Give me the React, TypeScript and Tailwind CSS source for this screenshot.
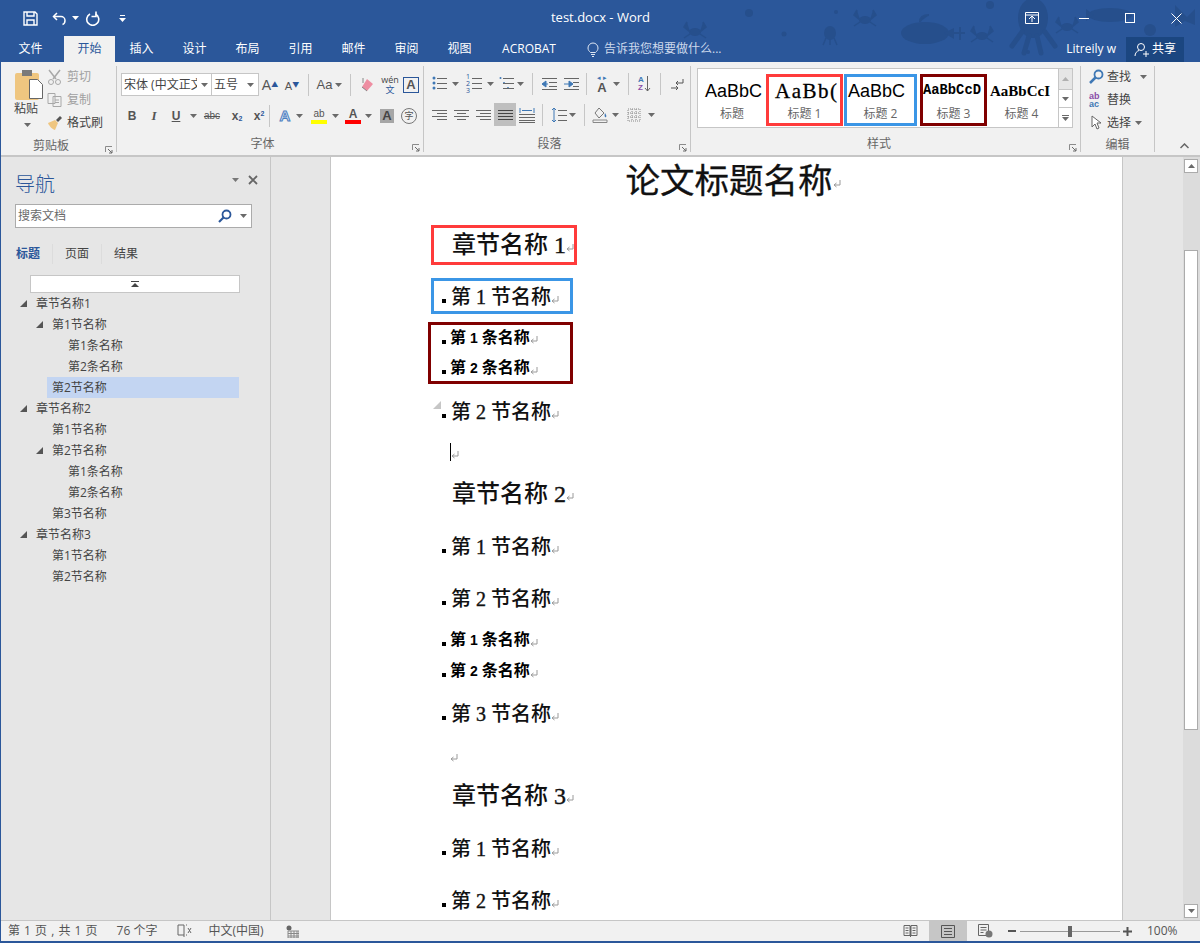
import type { ReactNode } from 'react';

const uiFont = "font-['Open_Sans','Noto_Sans_CJK_SC',sans-serif]";
const docFont = "font-['Liberation_Serif','Noto_Sans_CJK_SC',serif]";

function Ico({ w = 16, h = 16, children }: { w?: number; h?: number; children: ReactNode }) {
  return (
    <svg width={w} height={h} viewBox={`0 0 ${w} ${h}`} fill="none" className="shrink-0">
      {children}
    </svg>
  );
}

function Caret({ color = '#6a6a6a' }: { color?: string }) {
  return (
    <svg width="7" height="4" viewBox="0 0 7 4" className="shrink-0">
      <path d="M0 0h7L3.5 4z" fill={color} />
    </svg>
  );
}

function Launcher() {
  return (
    <svg width="8" height="8" viewBox="0 0 8 8" fill="none">
      <path d="M.5 6V.5H7" stroke="#8a8a8a" />
      <path d="M3 3l4 4M7 4v3H4" stroke="#6a6a6a" />
    </svg>
  );
}

function Sep({ ml = 'ml-0' }: { ml?: string }) {
  return <div className={`w-px h-[22px] bg-[#c6c6c6] shrink-0 ${ml}`} />;
}

function GroupLabel({ text }: { text: string }) {
  return <div className="text-[12px] leading-[16px] text-[#666] text-center">{text}</div>;
}

function Lines({ rows, x = 0, w = 14, color = '#666' }: { rows: [number, number][]; x?: number; w?: number; color?: string }) {
  return (
    <>
      {rows.map(([y, l], i) => (
        <path key={i} d={`M${x + l} ${y + 0.5}h${w - l}`} stroke={color} />
      ))}
    </>
  );
}

function TitleDoodles() {
  const c = '#264f8c';
  return (
    <svg width="530" height="62" viewBox="0 0 530 62" className="absolute right-0 top-0 pointer-events-none">
      <g fill={c}>
        <circle cx="79" cy="13" r="4" />
        <circle cx="114" cy="34" r="2.5" />
        <circle cx="166" cy="12" r="2" />
        <circle cx="320" cy="5" r="4" />
        <circle cx="358" cy="52" r="2" />
        <ellipse cx="160" cy="33" rx="6" ry="7" />
        <path d="M156 38l-3 7M160 39v6M164 38l3 7" stroke={c} strokeWidth="1.5" />
        <ellipse cx="255" cy="33" rx="24" ry="11" />
        <path d="M250 22c0-5 3-7 9-7" stroke={c} strokeWidth="2" />
        <path d="M274 33l10-5v11zM289 27h2v13h-2zM284 32h11v2h-11z" />
        <ellipse cx="363" cy="18" rx="15" ry="20" />
        <path d="M352 32l-10 14M359 36l-5 17M367 36l4 17M375 32l10 14" stroke={c} strokeWidth="5" strokeLinecap="round" />
        <ellipse cx="440" cy="15" rx="22" ry="7" />
        <path d="M416 9l8 6-8 6z" />
        <circle cx="480" cy="30" r="6" />
        <path d="M505 5l12 12 8-8v16l-10-4-10 6z" />
        {[[25, 32], [195, 20], [312, 36], [397, 27]].map(([x, y], i) => (
          <g key={i}>
            <ellipse cx={x} cy={y} rx="6" ry="4" />
            <path d={`M${x - 5} ${y}l-6-5 3-5M${x + 5} ${y}l6-5-3-5M${x - 5} ${y + 2}l-6 4M${x + 5} ${y + 2}l6 4`} stroke={c} strokeWidth="1.5" />
          </g>
        ))}
      </g>
    </svg>
  );
}

function TitleBar() {
  return (
    <div className="grid grid-cols-[1fr_auto_1fr] items-center h-[36px] text-white">
      <div className="flex items-center">
        <div className="ml-[22px]">
          <Ico w={15} h={15}>
            <path d="M1 1h11l2 2v11H1z" stroke="#fff" strokeWidth="1.4" />
            <path d="M4 1v4h7V1M4 14V9h7v5" stroke="#fff" strokeWidth="1.4" />
          </Ico>
        </div>
        <div className="ml-[14px]">
          <Ico w={15} h={15}>
            <path d="M5 2L1.5 5.5 5 9" stroke="#fff" strokeWidth="1.5" />
            <path d="M2 5.5h7a4 4 0 0 1 4 4c0 2-1 3.500-2.500 4" stroke="#fff" strokeWidth="1.5" />
          </Ico>
        </div>
        <div className="ml-[5px]">
          <Caret color="#fff" />
        </div>
        <div className="ml-[6px]">
          <Ico w={15} h={15}>
            <path d="M5 3a6 6 0 1 0 5.500 0" stroke="#fff" strokeWidth="1.6" />
            <path d="M11 .5v5H6.500" stroke="#fff" strokeWidth="1.6" />
          </Ico>
        </div>
        <div className="ml-[19px] flex flex-col items-center gap-[2px]">
          <div className="w-[5px] h-px bg-white" />
          <Caret color="#fff" />
        </div>
      </div>
      <div className="text-[13px] relative">test.docx - Word</div>
      <div className="flex items-center justify-end relative">
        <div className="w-[46px] flex justify-center mr-[6px]">
          <Ico w={14} h={12}>
            <path d="M.5.5h13v11H.5zM.5 3h13" stroke="#fff" />
            <path d="M4 7l3-3 3 3M7 4v6" stroke="#fff" />
          </Ico>
        </div>
        <div className="w-[46px] flex justify-center">
          <div className="w-[10px] h-px bg-white" />
        </div>
        <div className="w-[46px] flex justify-center">
          <div className="w-[10px] h-[10px] border border-white" />
        </div>
        <div className="w-[46px] flex justify-center mr-[1px]">
          <Ico w={11} h={11}>
            <path d="M.5.5l10 10M10.500.5l-10 10" stroke="#fff" />
          </Ico>
        </div>
      </div>
    </div>
  );
}

function TabsRow() {
  const tabs = ['插入', '设计', '布局', '引用', '邮件', '审阅', '视图'];
  return (
    <div className="flex items-stretch h-[26px] text-[12px] text-white relative">
      <div className="w-[53px] ml-[3px] flex items-center justify-center">文件</div>
      <div className="w-[51px] ml-[7px] flex items-center justify-center bg-[#f1f1f1] text-[#2b579a]">开始</div>
      {tabs.map(t => (
        <div key={t} className="w-[53px] flex items-center justify-center">
          {t}
        </div>
      ))}
      <div className="w-[86px] flex items-center justify-center">ACROBAT</div>
      <div className="ml-[15px] flex items-center gap-[5px] text-[#cdd9ec]">
        <Ico w={12} h={15}>
          <path d="M3.500 10.500C2 9 1 8 1 6a5 5 0 0 1 10 0c0 2-1 3-2.500 4.500zM4 12.500h4M5 14.500h2" stroke="#dfe7f3" />
        </Ico>
        <span>告诉我您想要做什么...</span>
      </div>
      <div className="ml-auto flex items-center">
        <span className="text-[12px] mr-[10px]">Litreily w</span>
        <div className="w-[58px] h-[25px] bg-[#1b4680] flex items-center justify-center gap-[3px] mr-[16px]">
          <Ico w={15} h={15}>
            <circle cx="7" cy="5" r="3.500" stroke="#fff" />
            <path d="M1 14c0-3 2-5 4-5.500M9 12h6M12 9v6" stroke="#fff" />
          </Ico>
          <span>共享</span>
        </div>
      </div>
    </div>
  );
}

function Clipboard() {
  return (
    <div className="w-[115px] flex flex-col shrink-0">
      <div className="h-[70px] flex">
        <div className="w-[46px] pl-[13px] pt-[4px] flex flex-col items-start">
          <Ico w={30} h={30}>
            <rect x="1" y="3" width="24" height="27" rx="2" fill="#efc680" />
            <rect x="8" y="0" width="10" height="6" fill="#7a7a7a" />
            <path d="M15.500 9.500h8l5 5v14h-13z" fill="#fff" stroke="#666" />
          </Ico>
          <span className="text-[12px] leading-[16px] mt-[1px] text-[#444]">粘贴</span>
          <div className="ml-[10px] mt-[6px]">
            <Caret />
          </div>
        </div>
        <div className="flex flex-col -mt-[1px] text-[12px] text-[#444]">
          <div className="h-[23px] flex items-center gap-[5px] text-[#a0a0a0]">
            <Ico w={15} h={16}>
              <path d="M2 1l7 9M13 1l-7 9" stroke="#a8a8a8" strokeWidth="1.500" />
              <circle cx="4" cy="13" r="2.500" stroke="#a8a8a8" />
              <circle cx="11" cy="13" r="2.500" stroke="#a8a8a8" />
            </Ico>
            <span>剪切</span>
          </div>
          <div className="h-[23px] flex items-center gap-[5px] text-[#a0a0a0]">
            <Ico w={15} h={16}>
              <path d="M1 1.500h7v10H1zM6 4.500h8v10H6z" stroke="#a8a8a8" fill="#f1f1f1" />
              <path d="M8 8h4M8 10.500h4" stroke="#a8a8a8" />
            </Ico>
            <span>复制</span>
          </div>
          <div className="h-[23px] flex items-center gap-[5px]">
            <Ico w={15} h={16}>
              <path d="M9 5l4-4 2 2-4 4z" fill="#555" />
              <path d="M1 8l7-3 3 3-3 7c-2 0-6-4-7-7z" fill="#efc680" />
            </Ico>
            <span>格式刷</span>
          </div>
        </div>
      </div>
      <div className="flex items-center mt-[2px]">
        <div className="flex-1 pr-[4px]">
          <GroupLabel text="剪贴板" />
        </div>
        <div className="mr-[3px] mt-[8px] flex">
          <Launcher />
        </div>
      </div>
    </div>
  );
}

function BigA({ cls, text = 'A' }: { cls: string; text?: string }) {
  return <span className={`font-['Liberation_Sans',sans-serif] leading-none ${cls}`}>{text}</span>;
}

function Font() {
  return (
    <div className="w-[307px] flex flex-col shrink-0 border-l border-[#c6c6c6] h-[86px] mt-[4px] -mb-[4px]">
      <div className="h-[70px] pl-[4px] pt-[7px] flex flex-col">
        <div className="flex items-center h-[23px]">
          <div className="w-[91px] h-[23px] bg-white border border-[#c6c6c6] flex items-center pl-[2px] text-[12px] text-[#444] overflow-hidden">
            <span className="w-[73px] whitespace-nowrap overflow-hidden">宋体 (中文正文)</span>
            <span className="ml-[4px]">
              <Caret />
            </span>
          </div>
          <div className="w-[47px] h-[23px] bg-white border border-l-0 border-[#c6c6c6] flex items-center pl-[2px] text-[12px] text-[#444]">
            <span>五号</span>
            <span className="ml-[9px]">
              <Caret />
            </span>
          </div>
          <div className="w-[22px] flex justify-center items-end text-[#555]">
            <BigA cls="text-[14px]" />
            <span className="text-[#2b579a] text-[7px] leading-[14px] self-start">▲</span>
          </div>
          <div className="w-[22px] flex justify-center items-end text-[#555]">
            <BigA cls="text-[11px]" />
            <span className="text-[#2b579a] text-[7px] leading-[14px] self-start">▼</span>
          </div>
          <Sep ml="ml-[5px]" />
          <div className="w-[41px] flex justify-center items-center gap-[3px] text-[#555]">
            <BigA cls="text-[13px]" text="Aa" />
            <Caret />
          </div>
          <Sep />
          <div className="w-[32px] flex justify-center">
            <Ico w={16} h={16}>
              <path d="M8 2l6 5-6 7-5-4z" fill="#ee8ea2" />
              <path d="M3 10l5 4" stroke="#888" />
              <path d="M4 1v5" stroke="#888" />
            </Ico>
          </div>
          <div className="w-[14px] flex flex-col items-center leading-none">
            <span className="text-[9px] leading-[10px] text-[#444]">wén</span>
            <span className="text-[9px] leading-[10px] text-[#2b579a]">文</span>
          </div>
          <div className="ml-[6px] w-[16px] h-[16px] border border-[#2b579a] flex items-center justify-center">
            <BigA cls="text-[13px] font-bold text-[#555]" />
          </div>
        </div>
        <div className="flex items-center h-[23px] mt-[8px] text-[#555]">
          <span className="w-[22px] text-center font-['Liberation_Sans',sans-serif] text-[12px] font-bold">B</span>
          <span className="w-[22px] text-center font-['Liberation_Serif',serif] text-[13px] italic font-bold">I</span>
          <span className="w-[22px] text-center font-['Liberation_Sans',sans-serif] text-[12px] font-bold underline">U</span>
          <span className="w-[13px] flex justify-center">
            <Caret />
          </span>
          <span className="w-[24px] text-center font-['Liberation_Sans',sans-serif] text-[10px] line-through">abc</span>
          <span className="w-[26px] text-center font-['Liberation_Sans',sans-serif] text-[12px] font-bold">
            x<sub className="text-[7px] text-[#2b579a]">2</sub>
          </span>
          <span className="w-[18px] text-center font-['Liberation_Sans',sans-serif] text-[12px] font-bold">
            x<sup className="text-[7px] text-[#2b579a]">2</sup>
          </span>
          <Sep ml="ml-[1px]" />
          <div className="w-[22px] ml-[4px] flex justify-center">
            <span className="font-['Liberation_Sans',sans-serif] text-[15px] leading-none font-bold text-[#dbe6f5] [-webkit-text-stroke:1px_#4d7fc0]">A</span>
          </div>
          <span className="w-[7px] flex justify-center">
            <Caret />
          </span>
          <div className="w-[26px] ml-[3px] flex flex-col items-center">
            <span className="text-[10px] leading-[12px] text-[#555] font-['Liberation_Sans',sans-serif]">ab</span>
            <div className="w-[16px] h-[4px] bg-[#ffff00]" />
          </div>
          <span className="w-[7px] flex justify-center">
            <Caret />
          </span>
          <div className="w-[22px] ml-[3px] flex flex-col items-center">
            <BigA cls="text-[12px] font-bold text-[#555]" />
            <div className="w-[16px] h-[4px] bg-[#ff0000]" />
          </div>
          <span className="w-[7px] ml-[1px] flex justify-center">
            <Caret />
          </span>
          <div className="ml-[8px] w-[14px] h-[14px] bg-[#a6a6a6] flex items-center justify-center">
            <BigA cls="text-[13px] font-bold text-[#444]" />
          </div>
          <div className="ml-[7px] w-[16px] h-[16px] rounded-full border border-[#777] flex items-center justify-center text-[9px] text-[#555]">字</div>
        </div>
      </div>
      <div className="flex items-center mt-[2px]">
        <div className="flex-1 pr-[4px]">
          <GroupLabel text="字体" />
        </div>
        <div className="mr-[3px] mt-[8px] flex">
          <Launcher />
        </div>
      </div>
    </div>
  );
}

function Paragraph() {
  const blue = '#3f78b5';
  return (
    <div className="w-[267px] flex flex-col shrink-0 border-l border-[#c6c6c6] h-[86px] mt-[4px] -mb-[4px]">
      <div className="h-[70px] pl-[8px] pt-[6px] flex flex-col">
        <div className="flex items-center h-[23px]">
          <Ico w={15} h={15}>
            {[2, 7, 12].map(y => (
              <circle key={y} cx="2" cy={y} r="1.500" fill={blue} />
            ))}
            <Lines rows={[[2, 0], [7, 0], [12, 0]]} x={5} w={10} />
          </Ico>
          <span className="ml-[5px]"><Caret /></span>
          <span className="ml-[7px] text-[7px] leading-[7px] w-[6px] text-[#2b579a]">1<br />2<br />3</span>
          <Ico w={10} h={15}>
            <Lines rows={[[2, 0], [7, 0], [12, 0]]} x={0} w={10} />
          </Ico>
          <span className="ml-[5px]"><Caret /></span>
          <span className="ml-[5px]">
            <Ico w={15} h={15}>
              <circle cx="1.500" cy="2" r="1" fill={blue} />
              <circle cx="5" cy="7" r="1" fill={blue} />
              <circle cx="9" cy="12" r="1" fill={blue} />
              <Lines rows={[[2, 0], [7, 0], [12, 0]]} x={4} w={11} />
            </Ico>
          </span>
          <span className="ml-[3px]"><Caret /></span>
          <Sep ml="ml-[8px]" />
          <span className="ml-[8px]">
            <Ico w={16} h={14}>
              <path d="M5 4L1 7l4 3zM2 7h5" fill={blue} stroke={blue} />
              <Lines rows={[[1, 0], [12, 0]]} x={1} w={15} />
              <Lines rows={[[5, 0], [9, 0]]} x={8} w={8} />
            </Ico>
          </span>
          <span className="ml-[6px]">
            <Ico w={16} h={14}>
              <path d="M6 4l4 3-4 3zM1 7h5" fill={blue} stroke={blue} />
              <Lines rows={[[1, 0], [12, 0]]} x={1} w={15} />
              <Lines rows={[[5, 0], [9, 0]]} x={10} w={6} />
            </Ico>
          </span>
          <Sep ml="ml-[7px]" />
          <div className="w-[16px] ml-[7px] flex flex-col items-center">
            <span className="text-[#3f78b5] text-[7px] leading-[7px] whitespace-nowrap">◂ ▸</span>
            <BigA cls="text-[13px] font-bold text-[#555]" />
          </div>
          <span className="ml-[3px]"><Caret /></span>
          <Sep ml="ml-[8px]" />
          <div className="ml-[9px] w-[14px] flex">
            <span className="text-[8px] leading-[8px] font-bold font-['Liberation_Sans',sans-serif]">
              <span className="text-[#3f78b5]">A</span>
              <br />
              <span className="text-[#8a4ea8]">Z</span>
            </span>
            <Ico w={7} h={16}>
              <path d="M3.500 0v15M1 12l2.500 3L6 12" stroke="#666" />
            </Ico>
          </div>
          <Sep ml="ml-[8px]" />
          <span className="ml-[9px]">
            <Ico w={14} h={14}>
              <path d="M13 2v4H6M6 6l2-2M6 6l2 2" stroke="#555" />
              <path d="M1 11h7M8 11l-2-2M8 11l-2 2" stroke="#555" />
            </Ico>
          </span>
        </div>
        <div className="flex items-center h-[23px] mt-[8px]">
          <Ico w={15} h={12}>
            <Lines rows={[[1, 0], [4, 5], [7, 0], [10, 5]]} w={15} />
          </Ico>
          <span className="ml-[7px]">
            <Ico w={15} h={12}>
              <Lines rows={[[1, 0], [7, 0]]} w={15} />
              <Lines rows={[[4, 3], [10, 3]]} w={12} />
            </Ico>
          </span>
          <span className="ml-[7px]">
            <Ico w={15} h={12}>
              <Lines rows={[[1, 0], [4, 4], [7, 0], [10, 4]]} w={15} />
            </Ico>
          </span>
          <div className="w-[22px] h-[23px] ml-[3px] bg-[#bfbfbf] flex items-center justify-center">
            <Ico w={15} h={12}>
              <Lines rows={[[1, 0], [4, 0], [7, 0], [10, 0]]} w={15} color="#444" />
            </Ico>
          </div>
          <span className="ml-[3px]">
            <Ico w={16} h={16}>
              <path d="M1 1v5M15 1v5M3 3.500h10" stroke={blue} />
              <Lines rows={[[7, 0], [10, 0], [13, 0], [15, 0]]} w={16} />
            </Ico>
          </span>
          <Sep ml="ml-[7px]" />
          <span className="ml-[8px]">
            <Ico w={16} h={16}>
              <path d="M3 1v14M1 3l2-2 2 2M1 13l2 2 2-2" stroke={blue} />
              <Lines rows={[[3, 0], [8, 0], [13, 0]]} x={7} w={9} />
            </Ico>
          </span>
          <span className="ml-[2px]"><Caret /></span>
          <Sep ml="ml-[8px]" />
          <span className="ml-[7px]">
            <Ico w={16} h={16}>
              <path d="M7 1l5 5-5 5-4-5z" stroke="#777" fill="#f1f1f1" />
              <path d="M13 6c1 2 2 3 1 4s-2-1-1-4" fill={blue} />
              <path d="M1 13h14v2.500H1z" stroke="#888" />
            </Ico>
          </span>
          <span className="ml-[4px]"><Caret /></span>
          <span className="ml-[8px]">
            <Ico w={14} h={14}>
              <path d="M1 1h12v12H1zM1 5h12M1 9h12M5 1v12M9 1v12" stroke="#888" strokeDasharray="1 1" />
            </Ico>
          </span>
          <span className="ml-[7px]"><Caret /></span>
        </div>
      </div>
      <div className="flex items-center mt-[2px]">
        <div className="flex-1 pr-[4px]">
          <GroupLabel text="段落" />
        </div>
        <div className="mr-[3px] mt-[8px] flex">
          <Launcher />
        </div>
      </div>
    </div>
  );
}

function StyleItem({ sample, label, cls, box, w }: { sample: string; label: string; cls: string; box: string; w: string }) {
  return (
    <div className={`${w} h-[52px] shrink-0 overflow-hidden flex flex-col items-center ${box}`}>
      <div className={`h-[29px] w-full overflow-hidden whitespace-nowrap flex items-center ${cls}`}>{sample}</div>
      <div className="text-[12px] leading-[16px] text-[#666]">{label}</div>
    </div>
  );
}

function Styles() {
  return (
    <div className="w-[390px] flex flex-col shrink-0 border-l border-[#c6c6c6] h-[86px] mt-[4px] -mb-[4px]">
      <div className="h-[70px] pl-[6px] pt-[2px]">
        <div className="w-[376px] h-[60px] bg-white border border-[#c6c6c6] flex items-start">
          <div className="flex items-start pt-[5px] flex-1">
            <StyleItem w="w-[68px]" box="pt-[3px]" sample="AaBbC" label="标题" cls="pl-[7px] text-[18px] text-black font-['Liberation_Sans',sans-serif]" />
            <StyleItem w="w-[77px]" box="border-[3px] border-[#ff3b3b]" sample="AaBb(" label="标题 1" cls="pl-[6px] text-[21px] tracking-[1.500px] text-black font-['Liberation_Serif',serif] [-webkit-text-stroke:0.300px_#000]" />
            <StyleItem w="w-[73px] ml-[1px]" box="border-[3px] border-[#3b96e6]" sample="AaBbC" label="标题 2" cls="pl-[1px] text-[18px] text-black font-['Liberation_Sans',sans-serif]" />
            <StyleItem w="w-[67px] ml-[3px]" box="border-[3px] border-[#800000]" sample="AaBbCcD" label="标题 3" cls="pl-0 text-[13.800px] text-black font-bold font-['Liberation_Mono',monospace]" />
            <StyleItem w="w-[69px]" box="pt-[3px]" sample="AaBbCcI" label="标题 4" cls="pl-[3px] text-[15px] text-black font-bold font-['Liberation_Serif',serif]" />
          </div>
          <div className="w-[14px] h-full shrink-0 border-l border-[#c6c6c6] flex flex-col">
            <div className="h-[20px] bg-[#e6e6e6] flex items-center justify-center rotate-180">
              <Caret color="#b0b0b0" />
            </div>
            <div className="h-[19px] border-y border-[#c6c6c6] flex items-center justify-center">
              <Caret />
            </div>
            <div className="flex-1 flex flex-col items-center justify-center gap-[1px]">
              <div className="w-[7px] h-px bg-[#6a6a6a]" />
              <Caret />
            </div>
          </div>
        </div>
      </div>
      <div className="flex items-center mt-[2px]">
        <div className="flex-1 pr-[2px]">
          <GroupLabel text="样式" />
        </div>
        <div className="mr-[3px] mt-[8px] flex">
          <Launcher />
        </div>
      </div>
    </div>
  );
}

function Editing() {
  return (
    <div className="w-[75px] flex flex-col shrink-0 border-x border-[#c6c6c6] h-[86px] mt-[4px] -mb-[4px]">
      <div className="h-[70px] pl-[8px] -mt-[1px] text-[12px] text-[#444] flex flex-col">
        <div className="h-[23px] flex items-center gap-[3px]">
          <Ico w={15} h={15}>
            <circle cx="9.500" cy="5.500" r="4" stroke="#3f78b5" strokeWidth="1.800" />
            <path d="M6.500 8.500L1 14" stroke="#3f78b5" strokeWidth="2.500" />
          </Ico>
          <span>查找</span>
          <span className="ml-[6px]"><Caret /></span>
        </div>
        <div className="h-[23px] flex items-center gap-[3px]">
          <span className="w-[15px] text-[9px] leading-[8px] font-bold font-['Liberation_Sans',sans-serif]">
            <span className="text-[#8a4ea8]">ab</span>
            <br />
            <span className="text-[#3f78b5]">ac</span>
          </span>
          <span>替换</span>
        </div>
        <div className="h-[23px] flex items-center gap-[3px]">
          <Ico w={15} h={15}>
            <path d="M3 1v11l3-3 2 5 2-1-2-5h4z" stroke="#666" fill="#fff" />
          </Ico>
          <span>选择</span>
          <span className="ml-[1px]"><Caret /></span>
        </div>
      </div>
      <div className="mt-[3px]">
        <GroupLabel text="编辑" />
      </div>
    </div>
  );
}

function Ribbon() {
  return (
    <div className="h-[95px] bg-[#f1f1f1] border-b-2 border-[#c6c6c6] flex items-start relative text-[#444]">
      <div className="w-[115px] mt-[4px]">
        <Clipboard />
      </div>
      <Font />
      <Paragraph />
      <Styles />
      <Editing />
      <svg width="9" height="6" viewBox="0 0 9 6" fill="none" className="absolute right-[11px] bottom-[6px]">
        <path d="M.5 5L4.500 1l4 4" stroke="#666" strokeWidth="1.500" />
      </svg>
    </div>
  );
}

type TreeRow = { t: string; lv: 0 | 1 | 2; open?: boolean; sel?: boolean };

const tree: TreeRow[] = [
  { t: '章节名称1', lv: 0, open: true },
  { t: '第1节名称', lv: 1, open: true },
  { t: '第1条名称', lv: 2 },
  { t: '第2条名称', lv: 2 },
  { t: '第2节名称', lv: 1, sel: true },
  { t: '章节名称2', lv: 0, open: true },
  { t: '第1节名称', lv: 1 },
  { t: '第2节名称', lv: 1, open: true },
  { t: '第1条名称', lv: 2 },
  { t: '第2条名称', lv: 2 },
  { t: '第3节名称', lv: 1 },
  { t: '章节名称3', lv: 0, open: true },
  { t: '第1节名称', lv: 1 },
  { t: '第2节名称', lv: 1 },
];

const levelPad = ['pl-[19px]', 'pl-[35px]', 'pl-[51px]'];

function NavPane() {
  return (
    <div className="w-[270px] shrink-0 border-r border-[#c6c6c6] bg-[#e6e6e6] flex flex-col">
      <div className="h-[39px] mt-[7px] flex items-center relative">
        <span className="ml-[14px] mt-[2px] text-[20px] font-light text-[#2b579a] leading-none">导航</span>
        <div className="ml-auto flex items-center gap-[9px] mr-[12px] -mt-[7px]">
          <Caret color="#777" />
          <Ico w={10} h={10}>
            <path d="M1 1l8 8M9 1L1 9" stroke="#666" strokeWidth="1.800" />
          </Ico>
        </div>
      </div>
      <div className="ml-[14px] w-[237px] h-[24px] mt-[1px] bg-white border border-[#ababab] flex items-center text-[12px] text-[#6a6a6a] pl-[2px]">
        <span>搜索文档</span>
        <span className="ml-auto mr-[4px]">
          <Ico w={14} h={14}>
            <circle cx="8.500" cy="5.500" r="4" stroke="#2b579a" strokeWidth="1.800" />
            <path d="M5.500 8.500L1 13" stroke="#2b579a" strokeWidth="2.200" />
          </Ico>
        </span>
        <span className="mr-[4px] ml-[4px]"><Caret /></span>
      </div>
      <div className="flex items-center h-[22px] mt-[15px] ml-[15px] text-[12px] text-[#444]">
        <span className="font-bold text-[#2b579a]">标题</span>
        <div className="w-px h-[20px] bg-[#dcdcdc] ml-[12px]" />
        <span className="ml-[12px]">页面</span>
        <div className="w-px h-[20px] bg-[#dcdcdc] ml-[12px]" />
        <span className="ml-[12px]">结果</span>
      </div>
      <div className="ml-[29px] w-[210px] h-[18px] mt-[10px] bg-white border border-[#c6c6c6] flex flex-col items-center justify-center gap-px">
        <div className="w-[8px] h-px bg-[#444]" />
        <svg width="8" height="4" viewBox="0 0 8 4">
          <path d="M4 0l4 4H0z" fill="#444" />
        </svg>
      </div>
      <div className="flex flex-col text-[12px] text-[#444]">
        {tree.map((r, i) => (
          <div key={i} className={`h-[21px] flex items-center ${r.sel ? 'ml-[46px] w-[192px] pl-[5px] bg-[#c3d5f2]' : levelPad[r.lv]}`}>
            {!r.sel && (
              <div className="w-[16px] shrink-0">
                {r.open && (
                  <svg width="7" height="7" viewBox="0 0 7 7">
                    <path d="M7 0v7H0z" fill="#555" />
                  </svg>
                )}
              </div>
            )}
            <span>{r.t}</span>
          </div>
        ))}
      </div>
    </div>
  );
}

function ParaMark() {
  return (
    <svg width="8" height="8" viewBox="0 0 8 8" fill="none" className="shrink-0 mt-[5px]">
      <path d="M7 0v5H1M1 5l2.500-2M1 5l2.500 2" stroke="#9a9a9a" />
    </svg>
  );
}

function Bullet() {
  return <div className="w-[4px] h-[4px] bg-black shrink-0 mt-[8px]" />;
}

function Digit({ n }: { n: number }) {
  return <span className="[-webkit-text-stroke:0.400px_#111]">{n}</span>;
}

function Chapter({ n, cls }: { n: number; cls: string }) {
  return (
    <div className={`flex items-center h-[36px] text-[24px] font-medium leading-none text-[#111] ${cls}`}>
      <span className="whitespace-pre">章节名称 <Digit n={n} /></span>
      <ParaMark />
    </div>
  );
}

function Section({ n, cls, inBox }: { n: number; cls: string; inBox?: boolean }) {
  return (
    <div className={`flex items-center h-[28px] pt-[2px] text-[20px] font-medium leading-none text-[#111] ${inBox ? 'pl-[8px]' : 'pl-[11px]'} ${cls}`}>
      <Bullet />
      <span className="ml-[5px] whitespace-pre">第 <Digit n={n} /> 节名称</span>
      <ParaMark />
    </div>
  );
}

function Article({ n, cls, inBox }: { n: number; cls: string; inBox?: boolean }) {
  return (
    <div className={`flex items-center h-[28px] pt-[2px] text-[16px] font-bold leading-none text-black ${inBox ? 'pl-[11px]' : 'pl-[14px] -ml-[3px]'} ${cls}`}>
      <Bullet />
      <span className="ml-[4px] whitespace-pre">
        第 <span className="font-['Liberation_Sans',sans-serif] text-[14px]">{n}</span> 条名称
      </span>
      <ParaMark />
    </div>
  );
}

function Page() {
  return (
    <div className={`w-[792px] shrink-0 bg-white overflow-hidden flex flex-col pl-[100px] border-l border-[#c6c6c6] ${docFont}`}>
      <div className="-ml-[100px] pl-[13px] h-[48px] flex items-center justify-center text-[34.500px] font-normal leading-none text-[#111] [-webkit-text-stroke:0.300px_#111]">
        <span>论文标题名称</span>
        <ParaMark />
      </div>
      <div className="mt-[20px] w-[146px] h-[40px] border-[3px] border-[#ff3b3b] pl-[18px] flex items-center">
        <Chapter n={1} cls="" />
      </div>
      <div className="mt-[13px] w-[142px] h-[36px] border-[3px] border-[#3b96e6] flex items-center">
        <Section n={1} cls="" inBox />
      </div>
      <div className="mt-[8px] -ml-[3px] w-[145px] h-[62px] border-[3px] border-[#800000] flex flex-col">
        <Article n={1} cls="-mt-[2px]" inBox />
        <Article n={2} cls="mt-[3px]" inBox />
      </div>
      <div className="relative">
        <div className="absolute left-[2px] top-[17px] w-0 h-0 border-b-[8px] border-l-[8px] border-b-[#c6c6c6] border-l-transparent" />
        <Section n={2} cls="mt-[13px]" />
      </div>
      <div className="mt-[13px] h-[28px] flex items-center pl-[19px]">
        <div className="w-px h-[18px] bg-black" />
        <ParaMark />
      </div>
      <Chapter n={2} cls="mt-[10px] pl-[21px]" />
      <Section n={1} cls="mt-[20px]" />
      <Section n={2} cls="mt-[24px]" />
      <Article n={1} cls="mt-[13px]" />
      <Article n={2} cls="mt-[3px]" />
      <Section n={3} cls="mt-[15px]" />
      <div className="mt-[14px] h-[28px] flex items-center pl-[19px]">
        <ParaMark />
      </div>
      <Chapter n={3} cls="mt-[9px] pl-[21px]" />
      <Section n={1} cls="mt-[20px]" />
      <Section n={2} cls="mt-[24px]" />
    </div>
  );
}

function ScrollBtn({ up }: { up?: boolean }) {
  return (
    <div className="w-[14px] h-[14px] ml-[1px] bg-white border border-[#ababab] flex items-center justify-center shrink-0">
      <div className={up ? 'rotate-180 flex' : 'flex'}>
        <Caret />
      </div>
    </div>
  );
}

function ScrollBar() {
  return (
    <div className="w-[17px] shrink-0 bg-[#dcdcdc] flex flex-col pt-[2px] pb-[2px]">
      <ScrollBtn up />
      <div className="w-[14px] h-[480px] ml-[1px] mt-[77px] bg-white border border-[#ababab]" />
      <div className="flex-1" />
      <ScrollBtn />
    </div>
  );
}

function StatusBar() {
  return (
    <div className="h-[21px] bg-[#f1f1f1] border-t border-[#c6c6c6] flex items-center text-[12px] text-[#555] shrink-0">
      <span className="ml-[7px] whitespace-pre [word-spacing:1px]">第 1 页 , 共 1 页</span>
      <span className="ml-[19px]">76 个字</span>
      <span className="ml-[20px]">
        <Ico w={15} h={14}>
          <path d="M7 1H1v10h6M7 1v12M9 1h1M9 11h1M11 4l3 5M14 4l-3 5" stroke="#666" />
        </Ico>
      </span>
      <span className="ml-[16px]">中文(中国)</span>
      <span className="ml-[23px]">
        <Ico w={13} h={13}>
          <circle cx="3" cy="3" r="2.500" fill="#666" />
          <path d="M2 6h11v7H2zM2 8.500h11M2 11h11M5 6v7M8 6v7M11 6v7" stroke="#888" />
        </Ico>
      </span>
      <div className="ml-auto flex items-center h-full">
        <Ico w={15} h={14}>
          <path d="M1 1.500h6v10H1zM8 1.500h6v10H8zM7.500 2v11M2.500 4h3M2.500 6.500h3M2.500 9h3M9.500 4h3M9.500 6.500h3M9.500 9h3" stroke="#666" />
        </Ico>
        <div className="ml-[11px] w-[38px] h-full bg-[#c6c6c6] flex items-center justify-center">
          <Ico w={14} h={13}>
            <path d="M.5.5h13v12H.5zM3 3.500h8M3 6.500h8M3 9.500h8" stroke="#555" />
          </Ico>
        </div>
        <span className="ml-[11px]">
          <Ico w={15} h={14}>
            <path d="M.5.5h10v11H.5zM2.500 3.500h6M2.500 6h6M2.500 8.500h3" stroke="#666" />
            <circle cx="11" cy="10" r="3.500" fill="#777" />
          </Ico>
        </span>
        <div className="ml-[15px] w-[8px] h-[2px] bg-[#555]" />
        <div className="ml-[4px] w-[100px] h-px bg-[#999] relative flex justify-center items-center">
          <div className="w-[4px] h-[11px] bg-[#666]" />
        </div>
        <span className="ml-[3px]">
          <Ico w={9} h={9}>
            <path d="M0 4.500h9M4.500 0v9" stroke="#555" strokeWidth="2" />
          </Ico>
        </span>
        <span className="ml-[15px] mr-[20px] w-[33px]">100%</span>
      </div>
    </div>
  );
}

export default function App() {
  return (
    <div className={`w-[1200px] h-[943px] overflow-hidden flex flex-col bg-[#2b579a] border-l border-[#2b579a] border-b-2 ${uiFont}`}>
      <div className="relative">
        <TitleDoodles />
        <TitleBar />
        <TabsRow />
      </div>
      <Ribbon />
      <div className="flex-1 min-h-0 flex bg-[#e6e6e6]">
        <NavPane />
        <div className="w-[59px] shrink-0" />
        <Page />
        <div className="flex-1 border-l border-[#c6c6c6]" />
        <ScrollBar />
      </div>
      <StatusBar />
    </div>
  );
}
